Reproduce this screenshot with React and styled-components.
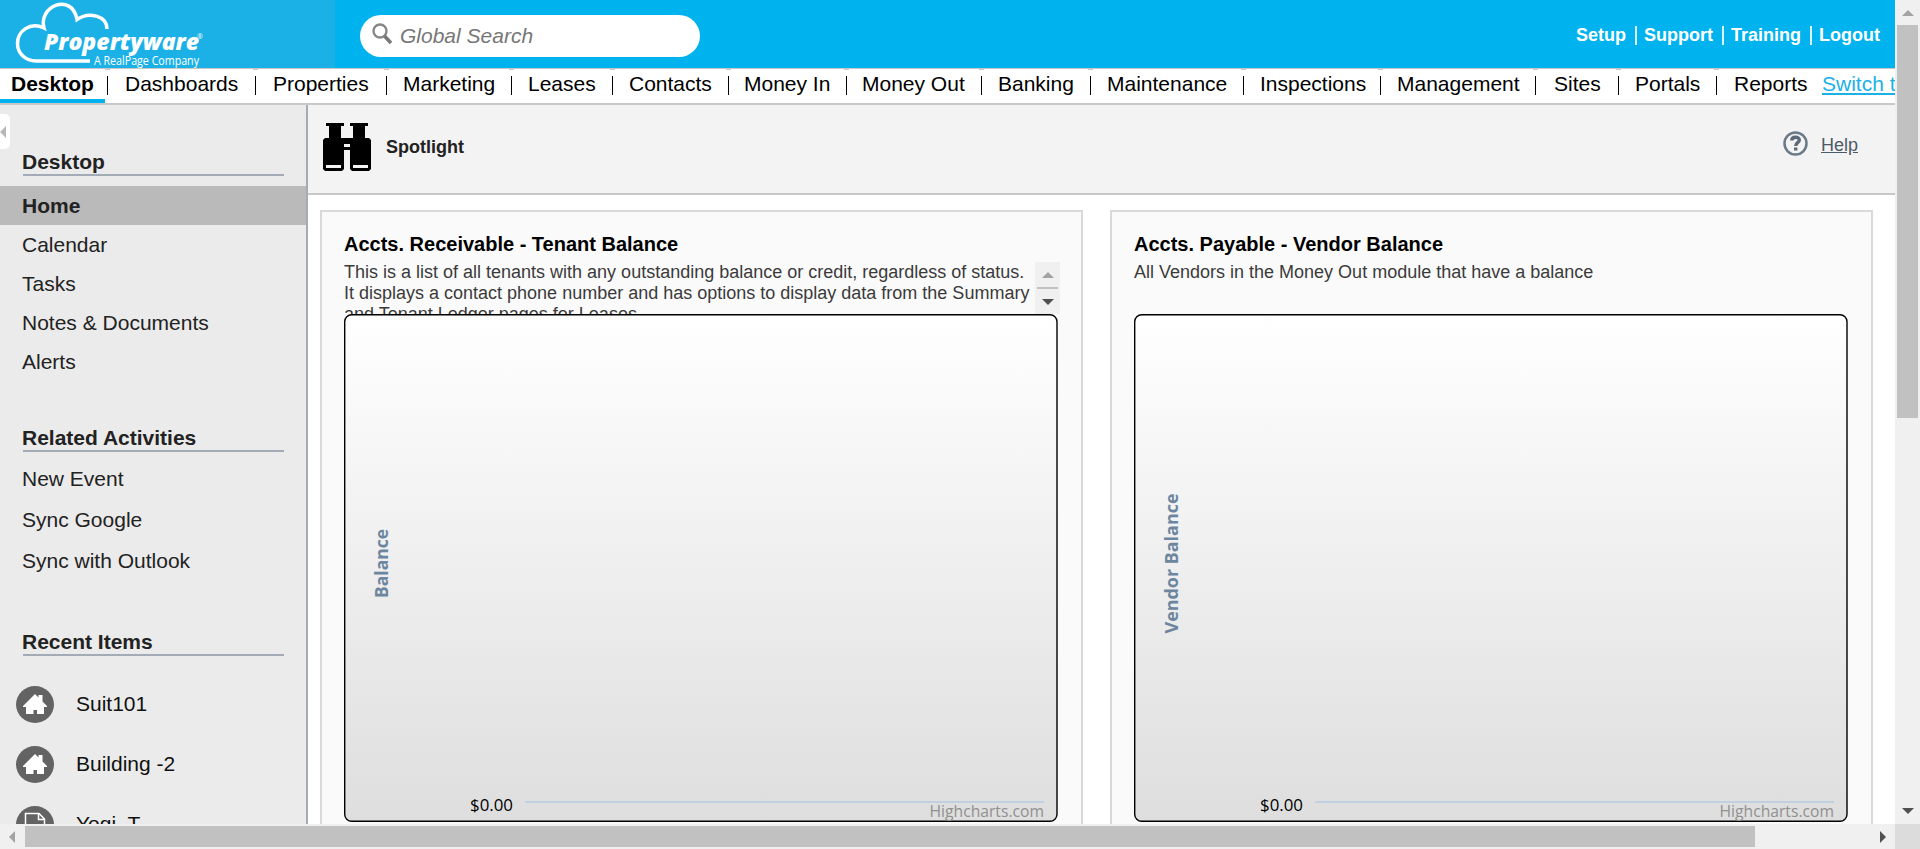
import React from "react";
import styled, { createGlobalStyle, css } from "styled-components";

const Global = createGlobalStyle`
  * { box-sizing: border-box; }
  body { margin: 0; overflow: hidden; background: #fff; color: #222; font: 21px/24px "Liberation Sans", Arial, sans-serif; }
`;
const Frame = styled.div`
  display: grid;
  grid-template: 824px 25px / 1895px 25px;
  width: 1920px;
  height: 849px;
  overflow: hidden;
`;
const Page = styled.div`display: flex; flex-direction: column; overflow: hidden;`;

const Header = styled.header`
  display: flex; align-items: center; height: 68px; flex: none; background: #00b3ee;
`;
const Brand = styled.div`width: 335px; height: 68px; background: #1bb1e7; margin-right: 25px;`;
const Search = styled.label`
  display: flex; align-items: center; width: 340px; height: 42px; margin-top: 4px;
  padding: 0 12px; gap: 7px; background: #fff; border-radius: 21px; color: #777; font-style: italic;
`;
const TopLinks = styled.nav`
  display: flex; margin: 2px 15px 0 auto; color: #fff; font-size: 18px; font-weight: bold;
`;
const TopLink = styled.a`
  & + &::before { content: ""; display: inline-block; width: 2px; height: 19px; margin: 0 7px 0 9px; background: #d9f4fd; vertical-align: -4px; }
`;

const Tabs = styled.nav`
  display: flex; height: 37px; flex: none; overflow: hidden; border-top: 1px solid #c8c8c8;
  border-bottom: 2px solid #c8c8c8; background: #fff; color: #000; white-space: nowrap;
`;
const Tab = styled.a`
  position: relative; flex: none; width: ${(p) => p.$w}px; height: 34px; padding: 3px 0 0 ${(p) => p.$pad}px;
  ${(p) => p.$bar && css`
    &::after { content: ""; position: absolute; right: 0; top: 7px; width: 1px; height: 19px; background: #000; }
    &::before { content: ""; position: absolute; right: -2px; top: 0; width: 5px; height: 1px; background: #c8c8c8; }
  `}
  ${(p) => p.$active && css`
    font-weight: bold;
    background: linear-gradient(#00b3ee, #00b3ee) 0 30px / 105px 4px no-repeat;
  `}
`;
const Switch = styled.a`
  flex: none; padding-top: 3px; color: #1bb1e7; text-decoration: underline;
  text-decoration-thickness: 2px; text-underline-offset: 2px;
`;

const Body = styled.div`display: flex; flex: 1; min-height: 0;`;
const Sidebar = styled.aside`
  position: relative; width: 308px; flex: none; padding-top: 43px; background: #ebebeb; border-right: 2px solid #a3abb6; overflow: hidden;
`;
const Collapse = styled.button`
  position: absolute; left: 0; top: 9px; width: 10px; height: 35px; padding: 0; border: 0; background: #fff;
  border-radius: 0 5px 5px 0; display: flex; align-items: center;
`;
const Heading = styled.h2`
  width: 261px; height: 28px; margin: ${(p) => p.$top || 0}px 0 0 23px; font-size: 21px; line-height: 28px;
  text-indent: -1px; border-bottom: 2px solid #a3abb6;
`;
const MenuList = styled.ul`list-style: none; margin: ${(p) => p.$top}px 0 0; padding: 0;`;
const MenuItem = styled.li`
  height: ${(p) => p.$h}px; line-height: ${(p) => p.$h}px; padding-left: 22px;
  ${(p) => p.$active && css`background: #bababa; font-weight: bold;`}
`;
const Recent = styled.li`
  display: flex; align-items: center; height: 60px; padding-left: 16px; gap: 22px; color: #111;
`;

const Main = styled.main`flex: 1; min-width: 0;`;
const PageHead = styled.div`
  display: flex; align-items: center; height: 90px; padding: 0 37px 0 15px; background: #f3f3f3; border-bottom: 2px solid #c8c8c8;
`;
const PageTitle = styled.h1`margin: -5px 0 0 15px; font-size: 18px; line-height: 22px;`;
const Help = styled.a`
  display: flex; align-items: center; gap: 13px; margin: -12px 0 0 auto; color: #4b5a69; font-size: 18px;
  span { text-decoration: underline; margin-top: 3px; }
`;
const Cards = styled.div`display: flex; gap: 27px; padding: 15px 0 0 12px;`;
const Card = styled.section`
  width: 763px; height: 640px; flex: none; padding: 20px 22px; background: #fafafa; border: 2px solid #d9d9d9;
`;
const CardTitle = styled.h3`margin: 0; font-size: 20px; line-height: 24px; color: #000;`;
const DescRow = styled.div`display: flex; height: 52px; margin: 6px -1px 0 0; overflow: hidden;`;
const Desc = styled.p`flex: 1; min-width: 0; margin: 0; font-size: 18px; line-height: 21px; color: #3a3a3a; white-space: pre;`;
const MiniScroll = styled.div`
  width: 25px; height: 52px; flex: none; background: #f0f0f0; display: flex; flex-direction: column; align-items: center; padding-top: 10px;
  i { width: 21px; height: 2px; margin: 9px 0 10px; background: #c1c1c1; }
`;
const Arrow = styled.span`
  width: 0; height: 0; flex: none; border: 6px solid transparent;
  ${(p) => p.$dir === "up" && css`border-bottom-color: ${p.$c}; border-top: 0;`}
  ${(p) => p.$dir === "down" && css`border-top-color: ${p.$c}; border-bottom: 0;`}
  ${(p) => p.$dir === "left" && css`border-right-color: ${p.$c}; border-left: 0;`}
  ${(p) => p.$dir === "right" && css`border-left-color: ${p.$c}; border-right: 0;`}
`;
const ChartSvg = styled.svg`display: block; font-family: "Open Sans", sans-serif;`;
const BinocularsSvg = styled.svg`margin-top: -4px;`;
const SearchSvg = styled.svg`margin-top: -4px;`;

const VBar = styled.div`
  display: flex; flex-direction: column; align-items: center; background: #f0f0f0; padding: 10px 0;
`;
const VThumb = styled.div`width: 21px; height: 393px; margin: 9px 0 auto; background: #c1c1c1;`;
const HBar = styled.div`display: flex; align-items: center; background: #f0f0f0; padding: 0 9px;`;
const HThumb = styled.div`width: 1730px; height: 21px; margin: 0 auto 0 10px; background: #c1c1c1;`;
const Corner = styled.div`background: #dcdcdc;`;

const TABS = [
  ["Desktop", 12, 108], ["Dashboards", 126, 256], ["Properties", 274, 387], ["Marketing", 404, 512],
  ["Leases", 529, 613], ["Contacts", 630, 729], ["Money In", 745, 847], ["Money Out", 863, 982],
  ["Banking", 999, 1091], ["Maintenance", 1108, 1244], ["Inspections", 1261, 1381],
  ["Management", 1398, 1536], ["Sites", 1555, 1619], ["Portals", 1636, 1717], ["Reports", 1735, 1822],
];

const Logo = () => (
  <svg width="335" height="68" viewBox="0 0 335 68">
    <path d="M90 61H36C25 61 17.500 53 17.500 43.500C17.500 31 30 21.500 44 28C38 6 72 -8 77 19.500C89 11 107 16 107 29" fill="none" stroke="#fff" strokeWidth="3.500" />
    <g fill="#fff" fontFamily='"Open Sans", sans-serif'>
      <text x="44" y="50" fontSize="23" fontWeight="800" fontStyle="italic" textLength="155" lengthAdjust="spacingAndGlyphs">Propertyware</text>
      <text x="197" y="39" fontSize="7">®</text>
      <text x="94" y="64.500" fontSize="12" textLength="105" lengthAdjust="spacingAndGlyphs">A RealPage Company</text>
    </g>
  </svg>
);
const SearchIcon = () => (
  <SearchSvg width="21" height="22" viewBox="0 0 21 22">
    <circle cx="8" cy="8" r="6.500" fill="none" stroke="#888" strokeWidth="2.400" />
    <path d="M12.500 13L19 20" stroke="#777" strokeWidth="3.500" />
  </SearchSvg>
);
const Binoculars = () => (
  <BinocularsSvg width="48" height="48" viewBox="0 0 48 48">
    <path d="M3 0H21V3H18V15H30V3H27V0H45V3H42V15H46L48 17V46L46 48H29L27 46V27H21V46L19 48H2L0 46V17L2 15H6V3H3Z" fill="#000" />
    <path d="M21 21H27V24H21ZM3 42H18V45H3ZM30 42H45V45H30Z" fill="#f3f3f3" />
  </BinocularsSvg>
);
const HelpIcon = () => (
  <svg width="25" height="25" viewBox="0 0 25 25">
    <circle cx="12.500" cy="12.500" r="11" fill="none" stroke="#6b7a89" strokeWidth="2.500" />
    <path d="M8.800 9.500C8.800 5.300 16.300 5.300 16.300 9C16.300 11.800 12.700 11.600 12.700 15M12.700 16.500V19.500" fill="none" stroke="#5b6978" strokeWidth="3.400" />
  </svg>
);
const HouseIcon = () => (
  <svg width="38" height="37" viewBox="0 0 38 37">
    <ellipse cx="19" cy="18.500" rx="19" ry="18.500" fill="#636363" />
    <path d="M7 20L19 8L22.500 11.500V9H26.500V15.500L31 20V21H28V28H21V24H17.500V28H10V21H7Z" fill="#fff" />
  </svg>
);
const DocIcon = () => (
  <svg width="38" height="37" viewBox="0 0 38 37">
    <ellipse cx="19" cy="18.500" rx="19" ry="18.500" fill="#636363" />
    <path d="M9.500 7.500H23L28.500 13V29H9.500ZM22.500 7.500V13.500H28.500" fill="none" stroke="#fff" strokeWidth="1.500" />
  </svg>
);

const Chart = ({ id, label, length }) => (
  <ChartSvg width="714" height="508" viewBox="0 0 714 508">
    <defs>
      <linearGradient id={id} x1="0" y1="0" x2="0" y2="1">
        <stop offset="0" stopColor="#fff" /><stop offset="1" stopColor="#dedede" />
      </linearGradient>
    </defs>
    <rect x="0.700" y="0.700" width="712.300" height="506.600" rx="7" fill={`url(#${id})`} stroke="#000" strokeWidth="1.400" />
    <text transform="translate(44 249.500) rotate(-90)" textAnchor="middle" fontSize="18" fontWeight="bold" fill="#6d869f" textLength={length} lengthAdjust="spacingAndGlyphs">{label}</text>
    <text x="126" y="496.500" fontSize="15.500" fill="#000" textLength="43" lengthAdjust="spacingAndGlyphs">$0.00</text>
    <path d="M181 488H700" stroke="#c0d0e0" strokeWidth="2" />
    <text x="585.500" y="502.500" fontSize="15.500" fill="#909090" textLength="114.500" lengthAdjust="spacingAndGlyphs">Highcharts.com</text>
  </ChartSvg>
);

export default function App() {
  return (
    <Frame>
      <Global />
      <Page>
        <Header>
          <Brand><Logo /></Brand>
          <Search><SearchIcon />Global Search</Search>
          <TopLinks>{["Setup", "Support", "Training", "Logout"].map((t) => <TopLink key={t}>{t}</TopLink>)}</TopLinks>
        </Header>
        <Tabs>
          {TABS.map(([name, text, end], i) => {
            const start = i ? TABS[i - 1][2] : 0;
            return <Tab key={name} $w={end - start} $pad={text - start - 1} $bar={i < TABS.length - 1} $active={i === 0}>{name}</Tab>;
          })}
          <Switch>Switch to</Switch>
        </Tabs>
        <Body>
          <Sidebar>
            <Collapse><Arrow $dir="left" $c="#b8b8b8" /></Collapse>
            <Heading>Desktop</Heading>
            <MenuList $top={10}>
              {["Home", "Calendar", "Tasks", "Notes & Documents", "Alerts"].map((t, i) => <MenuItem key={t} $h={39} $active={i === 0}>{t}</MenuItem>)}
            </MenuList>
            <Heading $top={43}>Related Activities</Heading>
            <MenuList $top={6}>
              {["New Event", "Sync Google", "Sync with Outlook"].map((t) => <MenuItem key={t} $h={41}>{t}</MenuItem>)}
            </MenuList>
            <Heading $top={47}>Recent Items</Heading>
            <MenuList $top={18}>
              <Recent><HouseIcon />Suit101</Recent>
              <Recent><HouseIcon />Building -2</Recent>
              <Recent><DocIcon />Yogi, T</Recent>
            </MenuList>
          </Sidebar>
          <Main>
            <PageHead>
              <Binoculars />
              <PageTitle>Spotlight</PageTitle>
              <Help><HelpIcon /><span>Help</span></Help>
            </PageHead>
            <Cards>
              <Card>
                <CardTitle>Accts. Receivable - Tenant Balance</CardTitle>
                <DescRow>
                  <Desc>{"This is a list of all tenants with any outstanding balance or credit, regardless of status.\nIt displays a contact phone number and has options to display data from the Summary\nand Tenant Ledger pages for Leases."}</Desc>
                  <MiniScroll><Arrow $dir="up" $c="#a3a3a3" /><i /><Arrow $dir="down" $c="#505050" /></MiniScroll>
                </DescRow>
                <Chart id="receivable" label="Balance" length={69} />
              </Card>
              <Card>
                <CardTitle>Accts. Payable - Vendor Balance</CardTitle>
                <DescRow><Desc>All Vendors in the Money Out module that have a balance</Desc></DescRow>
                <Chart id="payable" label="Vendor Balance" length={140} />
              </Card>
            </Cards>
          </Main>
        </Body>
      </Page>
      <VBar><Arrow $dir="up" $c="#a3a3a3" /><VThumb /><Arrow $dir="down" $c="#505050" /></VBar>
      <HBar><Arrow $dir="left" $c="#a3a3a3" /><HThumb /><Arrow $dir="right" $c="#505050" /></HBar>
      <Corner />
    </Frame>
  );
}
